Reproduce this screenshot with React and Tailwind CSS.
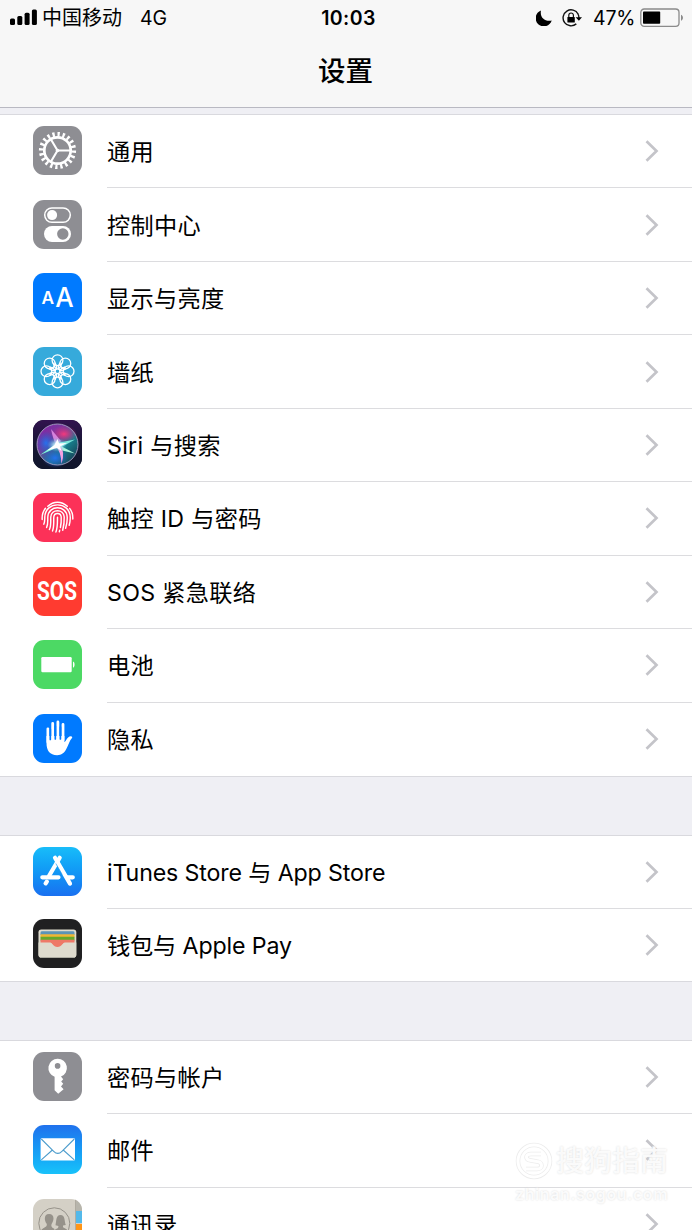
const petals = [0, 45, 90, 135, 180, 225, 270, 315]

function Tile({ className, children }) {
  return (
    <svg viewBox="0 0 49 49" className={`w-[49px] h-[49px] rounded-[11px] flex-shrink-0 ${className}`}>
      {children}
    </svg>
  )
}

function GeneralIcon() {
  return (
    <Tile className="bg-[#8e8e93]">
      <g fill="none" stroke="#fff">
        <circle cx="24.5" cy="24.5" r="13.2" strokeWidth="2.7" />
        <circle cx="24.5" cy="24.5" r="16.3" strokeWidth="4.6" pathLength="80" strokeDasharray="1.8 2.2" />
        <path d="M24.5 24.5H37M24.5 24.5L18 13.5M24.5 24.5L18 35.5" strokeWidth="2.1" />
      </g>
      <circle cx="24.5" cy="24.5" r="1.8" fill="#fff" />
    </Tile>
  )
}

function ControlIcon() {
  return (
    <Tile className="bg-[#8e8e93]">
      <rect x="11.7" y="7.9" width="25.6" height="14.4" rx="7.2" fill="none" stroke="#fff" strokeWidth="1.5" />
      <circle cx="19.1" cy="15.1" r="5" fill="#fff" />
      <rect x="11" y="26" width="27" height="16" rx="8" fill="#fff" />
      <circle cx="29.8" cy="34" r="5.7" fill="#8e8e93" />
    </Tile>
  )
}

function DisplayIcon() {
  return (
    <Tile className="bg-[#007aff]">
      <g fill="#fff" className="font-['Inter']">
        <text x="8.4" y="31" fontSize="17" fontWeight="600" textLength="12.6" lengthAdjust="spacingAndGlyphs">A</text>
        <text x="22.2" y="33.6" fontSize="27" fontWeight="500" textLength="18.4" lengthAdjust="spacingAndGlyphs">A</text>
      </g>
    </Tile>
  )
}

function WallpaperIcon() {
  return (
    <Tile className="bg-[#36aadb]">
      <g fill="none" stroke="#fff" strokeWidth="1.3">
        {petals.map((deg) => (
          <g key={deg} transform={`rotate(${deg} 24.5 24.3)`}>
            <circle cx="24.5" cy="13.2" r="5.4" />
            <path d="M20.2 16.4C20.8 19.2 22.4 21.2 23.6 22.2M28.8 16.4C28.2 19.2 26.6 21.2 25.4 22.2" />
          </g>
        ))}
        <circle cx="24.5" cy="24.3" r="2.4" />
      </g>
    </Tile>
  )
}

function SiriIcon() {
  return (
    <Tile className="bg-[#14152c]">
      <defs>
        <linearGradient id="siriBg" x1="0" y1="0" x2="0" y2="1">
          <stop offset="0" stopColor="#32134f" />
          <stop offset="0.5" stopColor="#151632" />
          <stop offset="1" stopColor="#10162c" />
        </linearGradient>
        <linearGradient id="siriOrb" x1="0" y1="0" x2="1" y2="1">
          <stop offset="0" stopColor="#8d1ba8" />
          <stop offset="0.35" stopColor="#753b9e" />
          <stop offset="0.62" stopColor="#177f8d" />
          <stop offset="1" stopColor="#182a3f" />
        </linearGradient>
        <radialGradient id="siriGlow">
          <stop offset="0" stopColor="#fff" />
          <stop offset="0.3" stopColor="#c8f4ff" stopOpacity="0.8" />
          <stop offset="1" stopColor="#5bd" stopOpacity="0" />
        </radialGradient>
        <radialGradient id="siriPink">
          <stop offset="0" stopColor="#f33a7c" />
          <stop offset="1" stopColor="#d81b86" stopOpacity="0" />
        </radialGradient>
        <radialGradient id="siriBlue">
          <stop offset="0" stopColor="#2672ee" />
          <stop offset="1" stopColor="#2456c8" stopOpacity="0" />
        </radialGradient>
      </defs>
      <path d="M0 0H49V49H0Z" fill="url(#siriBg)" />
      <circle cx="24.5" cy="24.5" r="20.5" fill="url(#siriOrb)" />
      <ellipse cx="31" cy="14" rx="13" ry="9" fill="url(#siriPink)" />
      <ellipse cx="13" cy="23" rx="10" ry="12" fill="url(#siriBlue)" />
      <ellipse cx="22" cy="38" rx="13" ry="10" fill="url(#siriBlue)" />
      <path d="M24 23L7 35L21 29Z" fill="#7df5d8" />
      <path d="M18 9Q20 19 23 25L28 21Z" fill="#e796ee" opacity=".8" />
      <path d="M24 23L42 19.5L27 28Z" fill="#7ce8dc" />
      <path d="M24 24L42 33.5L27 30Z" fill="#aaf7dd" />
      <path d="M22 25Q28 31 28.5 44Q32.5 32 27 25Z" fill="#f3a1e1" />
      <ellipse cx="24" cy="25" rx="10" ry="7" fill="url(#siriGlow)" />
      <path d="M24.5 19L26 23.6L34 23L27 26.5L28.5 31L24 28L14 30.5L21.5 25Z" fill="#fff" />
      <circle cx="24.5" cy="24.5" r="20.5" fill="none" stroke="#a7a2c5" strokeWidth="0.9" />
    </Tile>
  )
}

function TouchIcon() {
  return (
    <Tile className="bg-[#fc3158]">
      <g fill="none" stroke="#fff" strokeWidth="1.45" strokeLinecap="round">
        <path d="M14.8 13.2C20.5 7.8 28.5 7.8 34.3 13.2" />
        <path d="M9.2 26.5C8.9 22 10.2 18 12.5 15.2M36.6 15.4C39.2 18.6 40 22.1 39.8 26" />
        <path d="M10.8 31.2C12 28.5 11.7 26.3 11.8 24C12.3 7.8 36.7 7.8 37.2 24C37.4 27.2 37 29.5 36.2 32.2" />
        <path d="M13.6 34.5C15.3 30.8 14.6 27.3 14.8 24C15.3 11.7 33.7 11.7 34.2 24C34.4 28.5 33.6 32.2 32.6 35.2" />
        <path d="M16.4 36.5C18.3 32.5 17.6 27.5 17.8 24C18.2 15.6 30.8 15.6 31.2 24C31.4 29 30.8 33 29.7 37.2" />
        <path d="M19.5 38C21.4 33.2 20.5 28 20.8 24C21.1 19.2 27.9 19.2 28.2 24C28.4 28 28.1 31.3 27.4 34.5" />
        <path d="M22.9 39C24.8 34.5 24.4 29 24.5 24.2M26.7 37.2L26.3 38.8" />
      </g>
    </Tile>
  )
}

function SosIcon() {
  return (
    <div className="flex w-[49px] h-[49px] items-center justify-center rounded-[11px] bg-[#ff3b30] flex-shrink-0">
      <span className="inline-block scale-x-[0.83] font-['Roboto'] text-[25px] leading-[30px] font-bold text-white pt-[1px]">SOS</span>
    </div>
  )
}

function BatteryIcon() {
  return (
    <Tile className="bg-[#4cd964]">
      <rect x="8.3" y="17" width="30.4" height="15.2" rx="1.2" fill="#fff" />
      <path d="M40 21.5C42.1 22 42.1 27.2 40 27.7Z" fill="#fff" />
    </Tile>
  )
}

function PrivacyIcon() {
  return (
    <Tile className="bg-[#007aff]">
      <g fill="none" stroke="#fff" strokeWidth="2.8" strokeLinecap="round">
        <path d="M14.9 14.8V28M19.7 9.5V25M24.9 8V25M30 10.4V26" />
      </g>
      <path d="M13.5 22H31.4V28.2C33.6 27 34 22.6 37.6 22.3C39.2 22.2 39.8 23.3 38.8 24.3C36.6 26.6 35.5 31 33.3 35.1C31.2 39.2 28.5 41.2 24.2 41.2C16.8 41.2 13.5 36.5 13.5 29Z" fill="#fff" />
      <path d="M17.3 15V25.5M22.3 12V25M27.4 13V25" stroke="#007aff" strokeWidth="1.7" strokeLinecap="round" />
    </Tile>
  )
}

function AppStoreIcon() {
  return (
    <Tile className="bg-linear-to-b from-[#19bdf9] to-[#1a70f0]">
      <g stroke="#fff" strokeWidth="4.2" strokeLinecap="round" fill="none">
        <path d="M26.7 10.8L16 29M13.9 34.6L12.6 36.4" />
        <path d="M22 10.8L37 36.6" />
        <path d="M9.3 30.3H25.5M34.5 30.3H39.8" />
      </g>
      <path d="M22.8 16.5L29.2 27.5" stroke="#239cf5" strokeWidth=".7" />
    </Tile>
  )
}

function WalletIcon() {
  return (
    <Tile className="bg-[#202021]">
      <rect x="5.5" y="10.5" width="37.8" height="28" rx="2.8" fill="#dedbce" />
      <path d="M7.5 13.7Q7.5 12.3 9 12.3H40Q41.5 12.3 41.5 13.7V16H7.5Z" fill="#5b94b6" />
      <path d="M7.5 15.2H41.5V18.2H7.5Z" fill="#f0b634" />
      <path d="M7.5 17.8H41.5V21.5H7.5Z" fill="#66a82b" />
      <path d="M7.5 20.8H41.5V25H7.5Z" fill="#ee7968" />
      <path d="M5.5 23.5H17C20 23.5 20 28.2 24.5 28.2C29 28.2 29 23.5 32 23.5H43.3V35.7Q43.3 38.5 40.5 38.5H8.3Q5.5 38.5 5.5 35.7Z" fill="#dedbce" />
      <path d="M17 22.5H32C29.5 23.5 29 28 24.5 28C20 28 19.5 23.5 17 22.5Z" fill="#ee7968" />
    </Tile>
  )
}

function KeyIcon() {
  return (
    <Tile className="bg-[#8e8e93]">
      <path fillRule="evenodd" d="M24.6 6.8A9.2 9.2 0 0 0 21.6 24.7V38.3L25.2 41.7L30.6 37.3L28 34.4L30.2 31.7L28.2 29.4L30.2 27.2L28 24.6A9.2 9.2 0 0 0 24.6 6.8ZM24.6 11.1A2.8 2.8 0 1 1 24.6 16.7A2.8 2.8 0 1 1 24.6 11.1Z" fill="#fff" />
    </Tile>
  )
}

function MailIcon() {
  return (
    <Tile className="bg-linear-to-b from-[#2071ed] to-[#19c2fa]">
      <rect x="7.6" y="13.3" width="34.4" height="22.2" rx="1.3" fill="#fff" />
      <path d="M8.3 14L20.7 26.4Q24.8 30.5 28.9 26.4L41.3 14M8.3 34.8L19.4 25M41.3 34.8L30.2 25" fill="none" stroke="#4c9ccc" strokeWidth="1.1" />
    </Tile>
  )
}

function ContactsIcon() {
  return (
    <Tile className="bg-[#d4d0c6]">
      <path d="M42.5 0H49V12H42.5Z" fill="#b7b5ac" />
      <path d="M42.8 12H49V24H42.8Z" fill="#53b9ea" />
      <path d="M42.8 25H49V38H42.8Z" fill="#ff9516" />
      <path d="M42.5 0V49" stroke="#aaa59b" strokeWidth=".8" />
      <circle cx="21.3" cy="24.3" r="15.5" fill="none" stroke="#96928a" strokeWidth="1" />
      <g fill="#96928a">
        <path d="M16.1 15C10.6 15 11.1 21.5 13.7 24.8C14.5 28 11 28.2 8.5 30.5Q12 38 21.3 38V29.8C17.5 28 18.1 26 19 24.3C21.7 19.2 20.7 15 16.1 15Z" />
        <path d="M27.5 16C22.7 16 23.5 22 22.5 26.3L25.5 27L25 29L21.3 31V38Q30 38 34 30.5L30 28.3V26.5L32.8 26C31.2 22 32.3 16 27.5 16Z" />
      </g>
    </Tile>
  )
}

const groups = [
  {
    id: 'system',
    className: 'mt-[6px] h-[663px]',
    rows: [
      { label: '通用', Icon: GeneralIcon },
      { label: '控制中心', Icon: ControlIcon },
      { label: '显示与亮度', Icon: DisplayIcon },
      { label: '墙纸', Icon: WallpaperIcon },
      { label: 'Siri 与搜索', Icon: SiriIcon },
      { label: '触控 ID 与密码', Icon: TouchIcon },
      { label: 'SOS 紧急联络', Icon: SosIcon },
      { label: '电池', Icon: BatteryIcon },
      { label: '隐私', Icon: PrivacyIcon },
    ],
  },
  {
    id: 'store',
    className: 'mt-[58px] h-[147px]',
    rows: [
      { label: 'iTunes Store 与 App Store', Icon: AppStoreIcon, tight: true },
      { label: '钱包与 Apple Pay', Icon: WalletIcon, tight: true },
    ],
  },
  {
    id: 'accounts',
    className: 'mt-[58px] h-[222px]',
    rows: [
      { label: '密码与帐户', Icon: KeyIcon },
      { label: '邮件', Icon: MailIcon },
      { label: '通讯录', Icon: ContactsIcon },
    ],
  },
]

function Row({ label, Icon, tight, last }) {
  return (
    <div className="flex flex-1 items-stretch pl-[33px]">
      <div className="flex items-center w-[74px] pb-[2px] flex-shrink-0">
        <Icon />
      </div>
      <div className={`flex flex-1 items-center justify-between pr-[33px] ${last ? '' : 'border-b border-[#dcdcdf]'}`}>
        <span className={`text-[23.2px] leading-8 whitespace-nowrap pt-[2px] ${tight ? 'tracking-[-0.14px]' : 'tracking-[0.3px]'}`}>
          {label}
        </span>
        <svg viewBox="0 0 14 22" className="w-[14px] h-[22px]" fill="none" stroke="#c4c4c9" strokeWidth="2.7">
          <path d="M1.5 1.2L11.5 11L1.5 20.8" />
        </svg>
      </div>
    </div>
  )
}

function StatusBar() {
  return (
    <div className="grid grid-cols-3 h-[35px] items-center text-[20px] leading-6">
      <div className="flex items-center pl-[10px]">
        <svg viewBox="0 0 27 17" className="w-[27px] h-[17px] mr-[5px]">
          <rect x="0" y="9.5" width="5" height="6.5" rx="1.5" />
          <rect x="7.3" y="7" width="5" height="9" rx="1.5" />
          <rect x="14.6" y="3.8" width="5" height="12.2" rx="1.5" />
          <rect x="21.9" y="0.5" width="5" height="15.5" rx="1.5" />
        </svg>
        <span>中国移动</span>
        <span className="ml-[18px] text-[19.5px]">4G</span>
      </div>
      <div className="text-center font-semibold text-[19.5px] tracking-[0.4px] pl-[5px]">10:03</div>
      <div className="flex items-center justify-end pr-[8px]">
        <svg viewBox="0 0 16 16" className="w-[16px] h-[16px] mr-[10px]">
          <path d="M5 0.5C3.6 7.1 8.5 12 15.7 10.6A8.2 8.2 0 1 1 5 0.5Z" />
        </svg>
        <svg viewBox="0 0 20 18" className="w-[20px] h-[18px] mr-[11px]">
          <path d="M16.2 5.2A8 8 0 1 0 14.3 14.9M15.8 4.6Q17 6.5 17 9" fill="none" stroke="#111" strokeWidth="1.4" />
          <path d="M13.6 8.2H20L16.9 11.8Z" />
          <rect x="5.4" y="8" width="7.4" height="5.6" rx=".6" />
          <path d="M6.8 8V6.3A2.3 2.3 0 0 1 11.4 6.3V8" fill="none" stroke="#111" strokeWidth="1.2" />
        </svg>
        <span className="text-[19.5px] tracking-[-0.3px] mr-[5px]">47%</span>
        <svg viewBox="0 0 44 20" className="w-[44px] h-[20px]">
          <rect x="0.8" y="1" width="38.2" height="17.4" rx="3.4" fill="none" stroke="#8b8b8b" strokeWidth="1.3" />
          <rect x="3" y="3.6" width="17.2" height="12.2" rx=".8" />
          <path d="M41 6.8C43.6 7.8 43.6 11.8 41 12.8Z" fill="#8b8b8b" />
        </svg>
      </div>
    </div>
  )
}

export default function App() {
  return (
    <div className="relative w-[692px] h-[1230px] overflow-hidden bg-[#efeff4] text-black font-['Inter','Noto_Sans_CJK_SC',sans-serif]">
      <header className="h-[108px] bg-[#f7f7f7] border-b border-[#b9b9c2]">
        <StatusBar />
        <h1 className="text-center text-[27.5px] leading-[40px] font-medium mt-[16px] pr-[1px]">设置</h1>
      </header>

      <main>
        {groups.map((group) => (
          <section key={group.id} className={`flex flex-col bg-white border-y border-[#d9d9de] ${group.className}`}>
            {group.rows.map((row, i) => (
              <Row key={row.label} {...row} last={i === group.rows.length - 1} />
            ))}
          </section>
        ))}
      </main>

      {/* watermark over the list */}
      <div className="absolute left-[515px] top-[1142px] w-[156px] text-white/85">
        <div className="flex items-center gap-[3px]">
          <svg viewBox="0 0 38 38" className="w-[38px] h-[38px]" fill="none">
            <circle cx="19" cy="19" r="16" stroke="#ececec" strokeWidth="4.5" />
            <circle cx="19" cy="19" r="16" stroke="#fff" strokeWidth="3" />
            <path d="M26 12H16C10 12 10 18 16 18.5L22 19.5C28 20 28 27 22 27H11" stroke="#ececec" strokeWidth="4.5" />
            <path d="M26 12H16C10 12 10 18 16 18.5L22 19.5C28 20 28 27 22 27H11" stroke="#fff" strokeWidth="3" />
          </svg>
          <span className="text-[28px] leading-[38px] font-medium whitespace-nowrap [text-shadow:0_0_2px_#d8d8d8]">搜狗指南</span>
        </div>
        <div className="mt-[4px] text-[16px] leading-5 font-semibold tracking-[0.6px] whitespace-nowrap [text-shadow:0_0_2px_#d8d8d8]">zhinan.sogou.com</div>
      </div>
    </div>
  )
}
